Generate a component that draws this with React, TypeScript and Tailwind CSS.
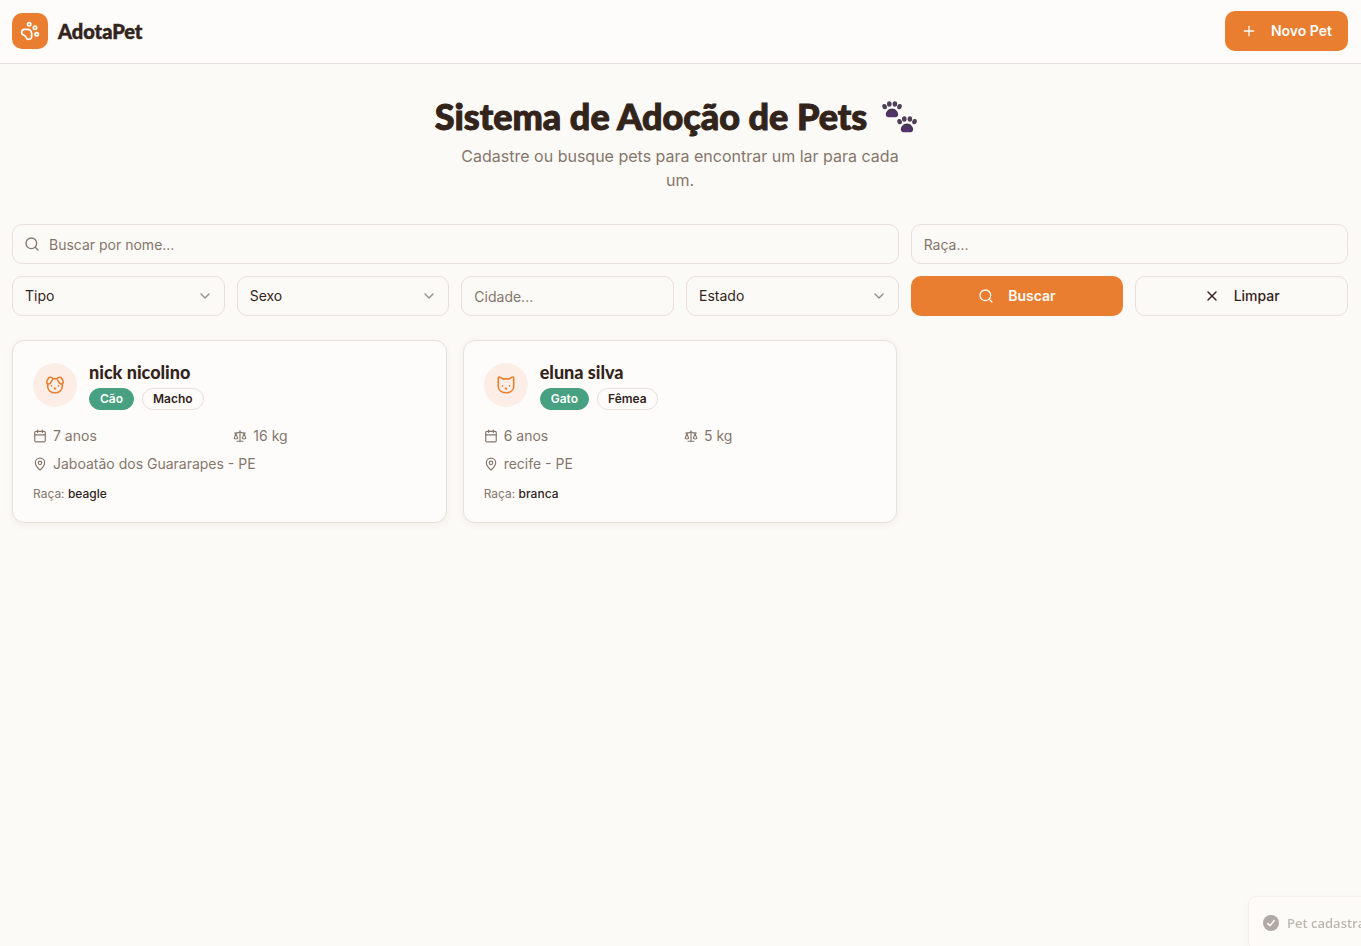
import { Calendar, ChevronDown, MapPin, PawPrint, Plus, Scale, Search, X } from 'lucide-react';

type Pet = {
  name: string;
  kind: 'Cão' | 'Gato';
  sex: string;
  age: string;
  weight: string;
  place: string;
  breed: string;
};

const pets: Pet[] = [
  { name: 'nick nicolino', kind: 'Cão', sex: 'Macho', age: '7 anos', weight: '16 kg', place: 'Jaboatão dos Guararapes - PE', breed: 'beagle' },
  { name: 'eluna silva', kind: 'Gato', sex: 'Fêmea', age: '6 anos', weight: '5 kg', place: 'recife - PE', breed: 'branca' },
];

const containerClass = 'w-full max-w-[1400px] pl-3 pr-[13px]';

const fieldClass =
  'h-10 w-full min-w-0 rounded-[10px] border border-[#e8e0da] bg-[#fcfaf6] text-sm text-[#33241b] outline-none placeholder:text-[#85766c] focus:border-[#e97e30]';

const displayFont = "font-['Lato','Inter',sans-serif]";

function Paws() {
  const paw = (
    <>
      <path d="M10 7.600c3.400 0 6.200 3 6.200 6 0 1.700-1.200 2.600-2.800 2.600H6.600c-1.600 0-2.800-.9-2.800-2.600 0-3 2.800-6 6.200-6z" fill="url(#pad)" />
      <ellipse cx="2.600" cy="5.600" rx="2.300" ry="2.700" transform="rotate(-18 2.600 5.600)" />
      <ellipse cx="7.300" cy="3" rx="2.300" ry="2.700" />
      <ellipse cx="12.900" cy="3" rx="2.300" ry="2.700" />
      <ellipse cx="17.500" cy="5.600" rx="2.300" ry="2.700" transform="rotate(18 17.500 5.600)" />
    </>
  );
  return (
    <svg width="48" height="36" viewBox="0 0 48 36" fill="#4f4059" aria-hidden="true">
      <defs>
        <radialGradient id="pad" cx=".5" cy=".8" r=".8">
          <stop offset="0" stopColor="#573272" />
          <stop offset="1" stopColor="#453850" />
        </radialGradient>
      </defs>
      <g transform="translate(5 3)">{paw}</g>
      <g transform="translate(20 18)">{paw}</g>
    </svg>
  );
}

function PetFace({ kind }: { kind: Pet['kind'] }) {
  return (
    <svg width="20" height="20" viewBox="0 0 20 20" fill="none" stroke="#e97e30" strokeWidth="1.600" strokeLinecap="round" strokeLinejoin="round" aria-hidden="true">
      {kind === 'Cão' ? (
        <>
          <path d="M7.800 3.900c1.500-.4 2.900-.4 4.400 0" />
          <path d="M7.800 3.900C7.100 2.100 4.500 1.700 3.400 3.300C2.300 4.800 1.600 6.400 1.800 7.500c.3 1.700 2.400 1.900 3.500.8C6.200 7.300 6.400 6.200 7 5.600" />
          <path d="M12.200 3.900c.7-1.800 3.300-2.200 4.400-.6c1.100 1.500 1.800 3.100 1.600 4.200c-.3 1.700-2.400 1.900-3.500.8c-.9-1-1.100-2.100-1.700-2.700" />
          <path d="M2.700 8.900v2.500c0 3.900 3.300 6.300 7.300 6.300s7.300-2.400 7.300-6.300V8.900" />
        </>
      ) : (
        <path d="M2.300 3.300c0-1.200.8-1.500 1.700-1L7.200 4.100c1.800-.4 3.800-.4 5.600 0L16 2.300c.9-.5 1.700-.2 1.700 1v8.300c0 4-3.400 6.200-7.700 6.200s-7.700-2.200-7.700-6.200z" />
      )}
      <path d="M6.500 10.800v.2M13.500 10.800v.2" />
      <path d="M9.500 13.400h1l-.5.500z" />
    </svg>
  );
}

function FilterSelect({ label, options }: { label: string; options: string[] }) {
  return (
    <div className="relative">
      <select aria-label={label} defaultValue="" className={`${fieldClass} appearance-none pl-3 pr-9`}>
        <option value="">{label}</option>
        {options.map((option) => (
          <option key={option}>{option}</option>
        ))}
      </select>
      <ChevronDown size={16} className="pointer-events-none absolute right-3 top-3 text-[#968d86]" />
    </div>
  );
}

function PetCard({ pet }: { pet: Pet }) {
  return (
    <article className="rounded-xl border border-[#e8e0da] bg-[#fefcfb] p-5 shadow-[0_2px_8px_rgba(51,36,27,0.05)]">
      <div className="mb-4 flex items-start gap-3">
        <div className="mt-0.5 flex size-11 shrink-0 items-center justify-center rounded-full bg-[#fceee6]">
          <PetFace kind={pet.kind} />
        </div>
        <div>
          <h2 className={`${displayFont} text-lg/[23px] font-black text-[#33241b]`}>{pet.name}</h2>
          <div className="mt-1 flex gap-2 text-xs/4 font-semibold">
            <span className="rounded-full border border-[#46a081] bg-[#46a081] px-2.5 py-0.5 text-white">{pet.kind}</span>
            <span className="rounded-full border border-[#e8e0da] px-2.5 py-0.5 text-[#33241b]">{pet.sex}</span>
          </div>
        </div>
      </div>
      <div className="grid grid-cols-2 gap-2 text-sm text-[#85766c]">
        <div className="flex items-center gap-1.5"><Calendar size={14} />{pet.age}</div>
        <div className="flex items-center gap-1.5"><Scale size={14} />{pet.weight}</div>
        <div className="col-span-2 flex items-center gap-1.5"><MapPin size={14} />{pet.place}</div>
      </div>
      <p className="mt-3 text-xs text-[#85766c]">
        Raça: <span className="font-medium text-[#33241b]">{pet.breed}</span>
      </p>
    </article>
  );
}

export default function App() {
  return (
    <div className="min-h-screen bg-[#fcfaf6] font-['Inter',sans-serif] text-[#33241b]">
      <header className="border-b border-[#e3e0dd] bg-[#fefcfb]">
        <div className={`${containerClass} mx-auto flex h-[63px] items-center justify-between pb-px`}>
          <a href="#" className="flex items-center gap-2.5">
            <span className="flex size-9 items-center justify-center rounded-[10px] bg-[#e97e30] text-white">
              <PawPrint size={20} />
            </span>
            <span className={`${displayFont} text-xl font-black [-webkit-text-stroke:0.5px_#33241b]`}>AdotaPet</span>
          </a>
          <button type="button" className="flex h-10 items-center gap-3.5 rounded-[10px] bg-[#e97e30] px-4 text-sm font-semibold text-[#fefcfb]">
            <Plus size={16} />
            Novo Pet
          </button>
        </div>
      </header>

      <main className={`${containerClass} mx-auto py-8`}>
        <div className="mb-8 text-center">
          <h1 className={`${displayFont} mb-2 flex items-center justify-center gap-2.5 text-4xl/10 font-black [-webkit-text-stroke:1px_#33241b]`}>
            Sistema de Adoção de Pets
            <Paws />
          </h1>
          <p className="mx-auto max-w-md text-base text-[#85766c]">
            Cadastre ou busque pets para encontrar um lar para cada um.
          </p>
        </div>

        <form className="mb-6 grid grid-cols-2 gap-3 md:grid-cols-6" onSubmit={(e) => e.preventDefault()}>
          <div className="relative col-span-2 md:col-span-4">
            <Search size={16} className="absolute left-3 top-3 text-[#85766c]" />
            <input type="text" aria-label="Buscar por nome" placeholder="Buscar por nome..." className={`${fieldClass} pl-9 pr-3`} />
          </div>
          <input type="text" aria-label="Raça" placeholder="Raça..." className={`${fieldClass} col-span-2 px-3`} />
          <FilterSelect label="Tipo" options={['Cão', 'Gato']} />
          <FilterSelect label="Sexo" options={['Macho', 'Fêmea']} />
          <input type="text" aria-label="Cidade" placeholder="Cidade..." className={`${fieldClass} px-3`} />
          <FilterSelect label="Estado" options={['PE']} />
          <button type="submit" className="flex h-10 items-center justify-center gap-3.5 rounded-[10px] bg-[#e97e30] text-sm font-semibold text-[#fefcfb]">
            <Search size={16} />
            Buscar
          </button>
          <button type="reset" className="flex h-10 items-center justify-center gap-3.5 rounded-[10px] border border-[#e8e0da] text-sm font-medium">
            <X size={16} />
            Limpar
          </button>
        </form>

        <section className="grid gap-4 md:grid-cols-3">
          {pets.map((pet) => (
            <PetCard key={pet.name} pet={pet} />
          ))}
        </section>
      </main>

      <div role="status" className="fixed -bottom-1 -right-[243px] flex w-[356px] items-center gap-2 rounded-lg border border-[#f3efeb] bg-[#fdfbf8] px-3.5 py-4 font-['Open_Sans',sans-serif] text-[13px]/5 font-semibold text-[#bdb7b2] shadow-[0_4px_12px_rgba(0,0,0,0.03)]">
        <svg width="16" height="16" viewBox="0 0 16 16" aria-hidden="true">
          <circle cx="8" cy="8" r="8" fill="#b0a9a5" />
          <path d="M4.600 8.400l2.400 2.300 4.200-5.200" fill="none" stroke="#fdfbf8" strokeWidth="1.500" strokeLinecap="round" strokeLinejoin="round" />
        </svg>
        Pet cadastrado com sucesso!
      </div>
    </div>
  );
}
